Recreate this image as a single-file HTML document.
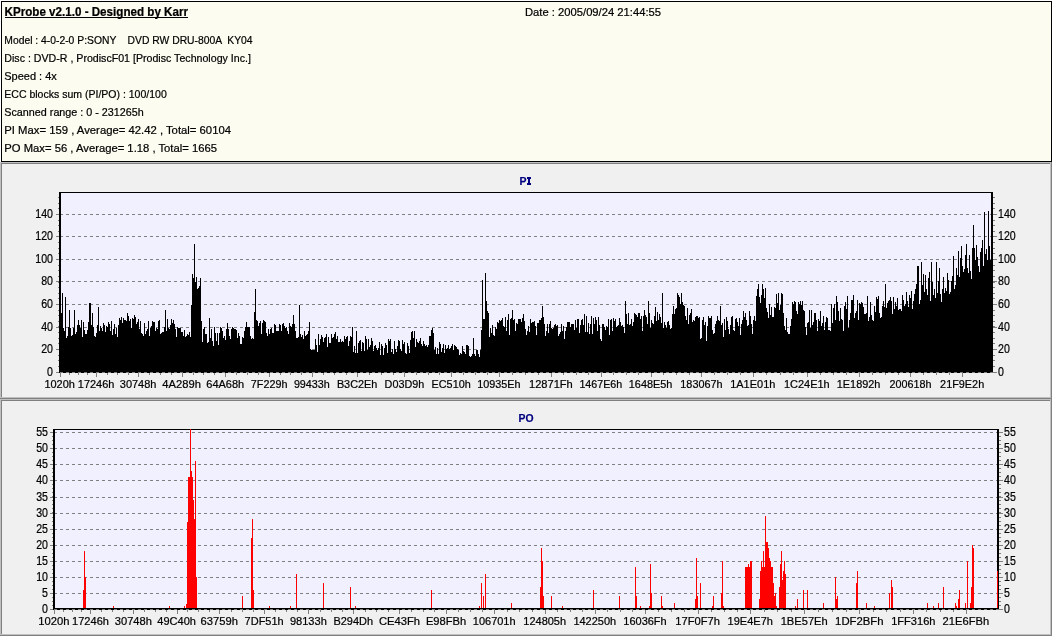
<!DOCTYPE html>
<html><head><meta charset="utf-8"><title>KProbe</title>
<style>html,body{margin:0;padding:0;background:#fff;width:1052px;height:636px;overflow:hidden}text{font-family:"Liberation Sans",sans-serif}</style>
</head><body><svg width="1052" height="636" viewBox="0 0 1052 636" shape-rendering="crispEdges" style="display:block;will-change:transform"><rect x="0" y="0" width="1052" height="636" fill="#FFFFFF"/><rect x="1" y="1" width="1051" height="161" fill="#000000"/><rect x="2" y="2" width="1049" height="159" fill="#FCFCF0"/><rect x="0" y="162" width="1052" height="237" fill="#F0F0F0"/><rect x="0" y="162" width="1052" height="1" fill="#C0C0C0"/><rect x="0" y="163" width="1051" height="1" fill="#808080"/><rect x="0" y="162" width="1" height="237" fill="#C0C0C0"/><rect x="1" y="163" width="1" height="236" fill="#808080"/><rect x="0" y="398" width="1052" height="1" fill="#808080"/><rect x="1" y="397" width="1051" height="1" fill="#C0C0C0"/><rect x="1051" y="162" width="1" height="237" fill="#808080"/><rect x="1050" y="163" width="1" height="235" fill="#C0C0C0"/><rect x="0" y="399" width="1052" height="237" fill="#F0F0F0"/><rect x="0" y="399" width="1052" height="1" fill="#C0C0C0"/><rect x="0" y="400" width="1051" height="1" fill="#808080"/><rect x="0" y="399" width="1" height="237" fill="#C0C0C0"/><rect x="1" y="400" width="1" height="236" fill="#808080"/><rect x="0" y="635" width="1052" height="1" fill="#808080"/><rect x="1" y="634" width="1051" height="1" fill="#C0C0C0"/><rect x="1051" y="399" width="1" height="237" fill="#808080"/><rect x="1050" y="400" width="1" height="235" fill="#C0C0C0"/><rect x="5" y="17" width="183" height="1" fill="#000"/><rect x="59" y="192" width="934" height="181" fill="#000"/><rect x="61" y="193" width="930" height="178" fill="#F0F0FF"/><path d="M61 372.5H991" stroke="#808080" stroke-width="1" stroke-dasharray="3 3" stroke-dashoffset="1" fill="none"/><path d="M61 349.5H991" stroke="#808080" stroke-width="1" stroke-dasharray="3 3" stroke-dashoffset="1" fill="none"/><path d="M61 327.5H991" stroke="#808080" stroke-width="1" stroke-dasharray="3 3" stroke-dashoffset="1" fill="none"/><path d="M61 304.5H991" stroke="#808080" stroke-width="1" stroke-dasharray="3 3" stroke-dashoffset="1" fill="none"/><path d="M61 281.5H991" stroke="#808080" stroke-width="1" stroke-dasharray="3 3" stroke-dashoffset="1" fill="none"/><path d="M61 259.5H991" stroke="#808080" stroke-width="1" stroke-dasharray="3 3" stroke-dashoffset="1" fill="none"/><path d="M61 236.5H991" stroke="#808080" stroke-width="1" stroke-dasharray="3 3" stroke-dashoffset="1" fill="none"/><path d="M61 214.5H991" stroke="#808080" stroke-width="1" stroke-dasharray="3 3" stroke-dashoffset="1" fill="none"/><path d="M61 371V313.0h1V371zM62 371V292.8h1V371zM63 371V327.6h1V371zM64 371V331.0h1V371zM65 371V297.2h1V371zM66 371V337.8h1V371zM67 371V336.3h1V371zM68 371V326.5h1V371zM69 371V309.6h1V371zM70 371V327.7h1V371zM71 371V335.9h1V371zM72 371V335.2h1V371zM73 371V327.9h1V371zM74 371V309.6h1V371zM75 371V334.2h1V371zM76 371V331.8h1V371zM77 371V324.7h1V371zM78 371V320.4h1V371zM79 371V325.4h1V371zM80 371V328.4h1V371zM81 371V320.0h1V371zM82 371V336.8h1V371zM83 371V321.5h1V371zM84 371V330.4h1V371zM85 371V333.7h1V371zM86 371V334.4h1V371zM87 371V330.0h1V371zM88 371V322.1h1V371zM89 371V302.9h1V371zM90 371V302.9h1V371zM91 371V325.4h1V371zM92 371V313.0h1V371zM93 371V326.7h1V371zM94 371V336.4h1V371zM95 371V336.5h1V371zM96 371V332.6h1V371zM97 371V324.8h1V371zM98 371V307.4h1V371zM99 371V330.5h1V371zM100 371V326.1h1V371zM101 371V328.1h1V371zM102 371V330.7h1V371zM103 371V323.3h1V371zM104 371V324.6h1V371zM105 371V331.8h1V371zM106 371V326.3h1V371zM107 371V327.0h1V371zM108 371V322.3h1V371zM109 371V324.2h1V371zM110 371V330.9h1V371zM111 371V321.1h1V371zM112 371V334.7h1V371zM113 371V328.7h1V371zM114 371V323.8h1V371zM115 371V333.8h1V371zM116 371V327.6h1V371zM117 371V337.3h1V371zM118 371V325.0h1V371zM119 371V317.6h1V371zM120 371V319.7h1V371zM121 371V316.5h1V371zM122 371V323.1h1V371zM123 371V318.3h1V371zM124 371V319.5h1V371zM125 371V319.6h1V371zM126 371V321.2h1V371zM127 371V313.0h1V371zM128 371V315.8h1V371zM129 371V320.9h1V371zM130 371V318.7h1V371zM131 371V328.1h1V371zM132 371V318.3h1V371zM133 371V318.9h1V371zM134 371V315.3h1V371zM135 371V317.0h1V371zM136 371V323.6h1V371zM137 371V322.1h1V371zM138 371V318.6h1V371zM139 371V329.4h1V371zM140 371V321.1h1V371zM141 371V333.1h1V371zM142 371V334.4h1V371zM143 371V336.3h1V371zM144 371V322.7h1V371zM145 371V334.1h1V371zM146 371V331.2h1V371zM147 371V328.5h1V371zM148 371V321.4h1V371zM149 371V335.5h1V371zM150 371V327.5h1V371zM151 371V325.9h1V371zM152 371V321.2h1V371zM153 371V322.0h1V371zM154 371V321.5h1V371zM155 371V330.6h1V371zM156 371V328.0h1V371zM157 371V329.1h1V371zM158 371V321.2h1V371zM159 371V320.3h1V371zM160 371V333.5h1V371zM161 371V333.2h1V371zM162 371V331.8h1V371zM163 371V331.7h1V371zM164 371V326.6h1V371zM165 371V309.6h1V371zM166 371V331.0h1V371zM167 371V318.6h1V371zM168 371V327.8h1V371zM169 371V328.7h1V371zM170 371V325.1h1V371zM171 371V319.3h1V371zM172 371V323.1h1V371zM173 371V319.8h1V371zM174 371V324.3h1V371zM175 371V329.1h1V371zM176 371V336.7h1V371zM177 371V327.3h1V371zM178 371V328.2h1V371zM179 371V327.5h1V371zM180 371V328.1h1V371zM181 371V331.8h1V371zM182 371V331.7h1V371zM183 371V335.7h1V371zM184 371V329.5h1V371zM185 371V336.5h1V371zM186 371V336.4h1V371zM187 371V334.0h1V371zM188 371V334.7h1V371zM189 371V332.4h1V371zM190 371V336.8h1V371zM191 371V305.1h1V371zM192 371V273.6h1V371zM193 371V278.1h1V371zM194 371V244.4h1V371zM195 371V281.5h1V371zM196 371V277.0h1V371zM197 371V289.4h1V371zM198 371V288.2h1V371zM199 371V286.0h1V371zM200 371V278.1h1V371zM201 371V320.9h1V371zM202 371V341.8h1V371zM203 371V328.5h1V371zM204 371V326.6h1V371zM205 371V334.4h1V371zM206 371V334.0h1V371zM207 371V343.0h1V371zM208 371V342.4h1V371zM209 371V317.5h1V371zM210 371V338.2h1V371zM211 371V328.8h1V371zM212 371V340.7h1V371zM213 371V345.6h1V371zM214 371V327.1h1V371zM215 371V333.3h1V371zM216 371V341.1h1V371zM217 371V333.1h1V371zM218 371V345.4h1V371zM219 371V333.3h1V371zM220 371V326.8h1V371zM221 371V328.3h1V371zM222 371V330.7h1V371zM223 371V337.7h1V371zM224 371V335.7h1V371zM225 371V339.8h1V371zM226 371V329.4h1V371zM227 371V323.1h1V371zM228 371V329.3h1V371zM229 371V336.3h1V371zM230 371V338.5h1V371zM231 371V328.9h1V371zM232 371V326.7h1V371zM233 371V328.3h1V371zM234 371V329.0h1V371zM235 371V328.8h1V371zM236 371V329.8h1V371zM237 371V338.4h1V371zM238 371V333.1h1V371zM239 371V335.9h1V371zM240 371V344.3h1V371zM241 371V344.4h1V371zM242 371V337.3h1V371zM243 371V337.7h1V371zM244 371V330.5h1V371zM245 371V327.0h1V371zM246 371V322.0h1V371zM247 371V327.3h1V371zM248 371V326.6h1V371zM249 371V327.1h1V371zM250 371V335.7h1V371zM251 371V338.6h1V371zM252 371V338.4h1V371zM253 371V339.1h1V371zM254 371V311.9h1V371zM255 371V289.4h1V371zM256 371V319.9h1V371zM257 371V320.6h1V371zM258 371V325.8h1V371zM259 371V323.2h1V371zM260 371V321.2h1V371zM261 371V334.3h1V371zM262 371V323.1h1V371zM263 371V319.7h1V371zM264 371V321.4h1V371zM265 371V321.8h1V371zM266 371V332.5h1V371zM267 371V336.3h1V371zM268 371V329.4h1V371zM269 371V334.2h1V371zM270 371V329.3h1V371zM271 371V327.9h1V371zM272 371V333.4h1V371zM273 371V333.3h1V371zM274 371V323.5h1V371zM275 371V325.1h1V371zM276 371V330.5h1V371zM277 371V331.1h1V371zM278 371V330.8h1V371zM279 371V323.8h1V371zM280 371V324.5h1V371zM281 371V330.8h1V371zM282 371V324.3h1V371zM283 371V323.3h1V371zM284 371V325.6h1V371zM285 371V328.4h1V371zM286 371V326.5h1V371zM287 371V331.1h1V371zM288 371V333.5h1V371zM289 371V323.3h1V371zM290 371V325.7h1V371zM291 371V326.7h1V371zM292 371V323.6h1V371zM293 371V315.2h1V371zM294 371V324.0h1V371zM295 371V331.3h1V371zM296 371V338.1h1V371zM297 371V337.5h1V371zM298 371V336.9h1V371zM299 371V305.1h1V371zM300 371V333.6h1V371zM301 371V337.4h1V371zM302 371V335.4h1V371zM303 371V339.4h1V371zM304 371V330.6h1V371zM305 371V336.1h1V371zM306 371V334.9h1V371zM307 371V333.6h1V371zM308 371V330.7h1V371zM309 371V322.0h1V371zM310 371V349.2h1V371zM311 371V350.1h1V371zM312 371V350.1h1V371zM313 371V350.1h1V371zM314 371V350.4h1V371zM315 371V339.3h1V371zM316 371V344.7h1V371zM317 371V351.6h1V371zM318 371V333.7h1V371zM319 371V344.9h1V371zM320 371V338.7h1V371zM321 371V334.7h1V371zM322 371V337.3h1V371zM323 371V341.5h1V371zM324 371V338.0h1V371zM325 371V337.4h1V371zM326 371V333.9h1V371zM327 371V346.8h1V371zM328 371V337.3h1V371zM329 371V343.1h1V371zM330 371V342.5h1V371zM331 371V334.1h1V371zM332 371V338.1h1V371zM333 371V337.3h1V371zM334 371V334.2h1V371zM335 371V332.1h1V371zM336 371V339.3h1V371zM337 371V336.4h1V371zM338 371V341.5h1V371zM339 371V341.5h1V371zM340 371V339.1h1V371zM341 371V342.3h1V371zM342 371V341.2h1V371zM343 371V341.9h1V371zM344 371V336.1h1V371zM345 371V339.0h1V371zM346 371V336.9h1V371zM347 371V336.1h1V371zM348 371V345.5h1V371zM349 371V340.8h1V371zM350 371V336.1h1V371zM351 371V337.3h1V371zM352 371V326.5h1V371zM353 371V351.8h1V371zM354 371V345.8h1V371zM355 371V353.1h1V371zM356 371V331.0h1V371zM357 371V353.1h1V371zM358 371V342.7h1V371zM359 371V341.3h1V371zM360 371V340.0h1V371zM361 371V351.0h1V371zM362 371V342.1h1V371zM363 371V342.8h1V371zM364 371V351.3h1V371zM365 371V335.5h1V371zM366 371V339.2h1V371zM367 371V349.6h1V371zM368 371V339.4h1V371zM369 371V346.5h1V371zM370 371V345.2h1V371zM371 371V337.8h1V371zM372 371V340.8h1V371zM373 371V350.8h1V371zM374 371V346.0h1V371zM375 371V344.8h1V371zM376 371V347.5h1V371zM377 371V350.1h1V371zM378 371V347.8h1V371zM379 371V342.1h1V371zM380 371V355.2h1V371zM381 371V344.2h1V371zM382 371V345.9h1V371zM383 371V355.3h1V371zM384 371V347.6h1V371zM385 371V343.3h1V371zM386 371V344.8h1V371zM387 371V353.4h1V371zM388 371V339.0h1V371zM389 371V341.3h1V371zM390 371V339.2h1V371zM391 371V352.2h1V371zM392 371V348.8h1V371zM393 371V354.3h1V371zM394 371V341.4h1V371zM395 371V348.7h1V371zM396 371V351.6h1V371zM397 371V346.1h1V371zM398 371V339.8h1V371zM399 371V340.9h1V371zM400 371V348.9h1V371zM401 371V351.1h1V371zM402 371V339.8h1V371zM403 371V344.0h1V371zM404 371V342.3h1V371zM405 371V352.6h1V371zM406 371V353.6h1V371zM407 371V342.5h1V371zM408 371V346.1h1V371zM409 371V353.1h1V371zM410 371V339.5h1V371zM411 371V332.3h1V371zM412 371V331.1h1V371zM413 371V337.7h1V371zM414 371V330.8h1V371zM415 371V346.8h1V371zM416 371V338.7h1V371zM417 371V342.0h1V371zM418 371V343.1h1V371zM419 371V341.1h1V371zM420 371V338.3h1V371zM421 371V343.9h1V371zM422 371V345.7h1V371zM423 371V341.3h1V371zM424 371V344.2h1V371zM425 371V346.0h1V371zM426 371V345.2h1V371zM427 371V347.1h1V371zM428 371V344.7h1V371zM429 371V335.5h1V371zM430 371V335.7h1V371zM431 371V330.0h1V371zM432 371V327.6h1V371zM433 371V333.0h1V371zM434 371V349.8h1V371zM435 371V346.8h1V371zM436 371V354.2h1V371zM437 371V348.4h1V371zM438 371V354.4h1V371zM439 371V341.7h1V371zM440 371V343.9h1V371zM441 371V351.9h1V371zM442 371V348.2h1V371zM443 371V343.9h1V371zM444 371V353.4h1V371zM445 371V344.9h1V371zM446 371V348.7h1V371zM447 371V348.0h1V371zM448 371V344.8h1V371zM449 371V349.2h1V371zM450 371V347.9h1V371zM451 371V346.1h1V371zM452 371V343.5h1V371zM453 371V349.8h1V371zM454 371V344.8h1V371zM455 371V345.9h1V371zM456 371V346.6h1V371zM457 371V349.0h1V371zM458 371V349.7h1V371zM459 371V354.5h1V371zM460 371V352.9h1V371zM461 371V354.1h1V371zM462 371V345.6h1V371zM463 371V350.9h1V371zM464 371V352.3h1V371zM465 371V353.8h1V371zM466 371V344.7h1V371zM467 371V344.5h1V371zM468 371V346.3h1V371zM469 371V356.1h1V371zM470 371V356.6h1V371zM471 371V356.0h1V371zM472 371V354.3h1V371zM473 371V337.8h1V371zM474 371V354.4h1V371zM475 371V356.3h1V371zM476 371V350.4h1V371zM477 371V350.3h1V371zM478 371V353.5h1V371zM479 371V356.5h1V371zM480 371V350.4h1V371zM481 371V329.9h1V371zM482 371V280.4h1V371zM483 371V318.6h1V371zM484 371V318.6h1V371zM485 371V272.5h1V371zM486 371V300.6h1V371zM487 371V310.8h1V371zM488 371V313.0h1V371zM489 371V336.9h1V371zM490 371V328.1h1V371zM491 371V332.7h1V371zM492 371V325.4h1V371zM493 371V334.6h1V371zM494 371V335.6h1V371zM495 371V327.3h1V371zM496 371V328.8h1V371zM497 371V322.2h1V371zM498 371V323.2h1V371zM499 371V319.8h1V371zM500 371V321.1h1V371zM501 371V320.3h1V371zM502 371V318.0h1V371zM503 371V325.6h1V371zM504 371V326.8h1V371zM505 371V316.6h1V371zM506 371V330.9h1V371zM507 371V320.1h1V371zM508 371V314.1h1V371zM509 371V334.5h1V371zM510 371V318.6h1V371zM511 371V317.8h1V371zM512 371V309.6h1V371zM513 371V320.0h1V371zM514 371V318.9h1V371zM515 371V331.2h1V371zM516 371V323.2h1V371zM517 371V323.6h1V371zM518 371V318.6h1V371zM519 371V319.0h1V371zM520 371V318.7h1V371zM521 371V322.3h1V371zM522 371V317.8h1V371zM523 371V314.1h1V371zM524 371V320.6h1V371zM525 371V328.9h1V371zM526 371V335.1h1V371zM527 371V331.4h1V371zM528 371V326.2h1V371zM529 371V332.2h1V371zM530 371V318.6h1V371zM531 371V322.7h1V371zM532 371V321.6h1V371zM533 371V321.6h1V371zM534 371V320.8h1V371zM535 371V326.0h1V371zM536 371V335.0h1V371zM537 371V322.7h1V371zM538 371V323.2h1V371zM539 371V320.2h1V371zM540 371V319.8h1V371zM541 371V318.1h1V371zM542 371V306.2h1V371zM543 371V317.1h1V371zM544 371V324.2h1V371zM545 371V336.0h1V371zM546 371V331.4h1V371zM547 371V324.2h1V371zM548 371V332.6h1V371zM549 371V324.0h1V371zM550 371V321.2h1V371zM551 371V327.5h1V371zM552 371V329.3h1V371zM553 371V327.7h1V371zM554 371V324.8h1V371zM555 371V323.7h1V371zM556 371V325.7h1V371zM557 371V325.3h1V371zM558 371V335.9h1V371zM559 371V333.9h1V371zM560 371V331.6h1V371zM561 371V324.0h1V371zM562 371V330.6h1V371zM563 371V326.4h1V371zM564 371V338.6h1V371zM565 371V331.4h1V371zM566 371V327.2h1V371zM567 371V322.0h1V371zM568 371V321.7h1V371zM569 371V321.9h1V371zM570 371V326.9h1V371zM571 371V323.8h1V371zM572 371V324.4h1V371zM573 371V324.4h1V371zM574 371V330.0h1V371zM575 371V319.7h1V371zM576 371V328.4h1V371zM577 371V318.8h1V371zM578 371V319.2h1V371zM579 371V333.0h1V371zM580 371V324.5h1V371zM581 371V320.4h1V371zM582 371V318.9h1V371zM583 371V324.6h1V371zM584 371V314.1h1V371zM585 371V331.7h1V371zM586 371V316.1h1V371zM587 371V331.6h1V371zM588 371V322.7h1V371zM589 371V333.9h1V371zM590 371V323.9h1V371zM591 371V316.0h1V371zM592 371V334.2h1V371zM593 371V318.3h1V371zM594 371V324.3h1V371zM595 371V317.1h1V371zM596 371V320.4h1V371zM597 371V331.0h1V371zM598 371V316.9h1V371zM599 371V324.7h1V371zM600 371V339.3h1V371zM601 371V341.3h1V371zM602 371V323.7h1V371zM603 371V324.3h1V371zM604 371V326.7h1V371zM605 371V330.0h1V371zM606 371V326.0h1V371zM607 371V326.5h1V371zM608 371V319.3h1V371zM609 371V335.1h1V371zM610 371V320.3h1V371zM611 371V319.3h1V371zM612 371V330.5h1V371zM613 371V318.3h1V371zM614 371V320.8h1V371zM615 371V318.6h1V371zM616 371V326.9h1V371zM617 371V325.6h1V371zM618 371V325.2h1V371zM619 371V317.5h1V371zM620 371V322.4h1V371zM621 371V325.7h1V371zM622 371V324.7h1V371zM623 371V327.2h1V371zM624 371V332.6h1V371zM625 371V300.6h1V371zM626 371V314.2h1V371zM627 371V323.8h1V371zM628 371V312.8h1V371zM629 371V324.6h1V371zM630 371V324.2h1V371zM631 371V319.3h1V371zM632 371V326.1h1V371zM633 371V321.9h1V371zM634 371V312.5h1V371zM635 371V313.5h1V371zM636 371V314.5h1V371zM637 371V317.3h1V371zM638 371V313.1h1V371zM639 371V312.7h1V371zM640 371V318.7h1V371zM641 371V315.9h1V371zM642 371V330.7h1V371zM643 371V315.7h1V371zM644 371V309.6h1V371zM645 371V315.4h1V371zM646 371V317.1h1V371zM647 371V323.8h1V371zM648 371V300.6h1V371zM649 371V312.9h1V371zM650 371V327.8h1V371zM651 371V320.0h1V371zM652 371V322.5h1V371zM653 371V323.5h1V371zM654 371V315.6h1V371zM655 371V306.6h1V371zM656 371V320.6h1V371zM657 371V312.0h1V371zM658 371V319.5h1V371zM659 371V313.9h1V371zM660 371V317.3h1V371zM661 371V323.3h1V371zM662 371V292.8h1V371zM663 371V327.7h1V371zM664 371V321.5h1V371zM665 371V324.7h1V371zM666 371V327.6h1V371zM667 371V321.5h1V371zM668 371V320.9h1V371zM669 371V325.2h1V371zM670 371V328.7h1V371zM671 371V327.9h1V371zM672 371V314.2h1V371zM673 371V306.1h1V371zM674 371V314.2h1V371zM675 371V309.0h1V371zM676 371V308.4h1V371zM677 371V292.8h1V371zM678 371V294.7h1V371zM679 371V297.2h1V371zM680 371V304.3h1V371zM681 371V292.8h1V371zM682 371V301.8h1V371zM683 371V305.2h1V371zM684 371V306.2h1V371zM685 371V315.6h1V371zM686 371V320.1h1V371zM687 371V307.8h1V371zM688 371V324.2h1V371zM689 371V315.3h1V371zM690 371V313.1h1V371zM691 371V309.4h1V371zM692 371V321.6h1V371zM693 371V320.2h1V371zM694 371V320.8h1V371zM695 371V317.4h1V371zM696 371V316.4h1V371zM697 371V316.0h1V371zM698 371V317.7h1V371zM699 371V317.3h1V371zM700 371V338.5h1V371zM701 371V337.8h1V371zM702 371V320.1h1V371zM703 371V316.9h1V371zM704 371V324.6h1V371zM705 371V322.3h1V371zM706 371V341.0h1V371zM707 371V326.4h1V371zM708 371V316.4h1V371zM709 371V318.1h1V371zM710 371V317.6h1V371zM711 371V315.7h1V371zM712 371V329.9h1V371zM713 371V334.3h1V371zM714 371V332.7h1V371zM715 371V323.6h1V371zM716 371V320.6h1V371zM717 371V316.2h1V371zM718 371V319.8h1V371zM719 371V321.2h1V371zM720 371V306.2h1V371zM721 371V324.9h1V371zM722 371V323.0h1V371zM723 371V337.4h1V371zM724 371V318.8h1V371zM725 371V330.3h1V371zM726 371V316.5h1V371zM727 371V321.2h1V371zM728 371V328.5h1V371zM729 371V333.6h1V371zM730 371V325.3h1V371zM731 371V316.9h1V371zM732 371V315.8h1V371zM733 371V329.7h1V371zM734 371V331.4h1V371zM735 371V319.1h1V371zM736 371V317.9h1V371zM737 371V322.0h1V371zM738 371V326.1h1V371zM739 371V317.6h1V371zM740 371V334.9h1V371zM741 371V324.0h1V371zM742 371V320.4h1V371zM743 371V311.4h1V371zM744 371V316.7h1V371zM745 371V312.6h1V371zM746 371V320.1h1V371zM747 371V325.8h1V371zM748 371V325.4h1V371zM749 371V311.4h1V371zM750 371V315.7h1V371zM751 371V323.9h1V371zM752 371V334.0h1V371zM753 371V319.6h1V371zM754 371V316.2h1V371zM755 371V321.2h1V371zM756 371V296.2h1V371zM757 371V289.2h1V371zM758 371V283.8h1V371zM759 371V296.8h1V371zM760 371V302.5h1V371zM761 371V294.6h1V371zM762 371V283.8h1V371zM763 371V289.0h1V371zM764 371V297.5h1V371zM765 371V287.5h1V371zM766 371V307.7h1V371zM767 371V311.6h1V371zM768 371V317.8h1V371zM769 371V304.4h1V371zM770 371V315.3h1V371zM771 371V306.5h1V371zM772 371V317.2h1V371zM773 371V317.4h1V371zM774 371V307.4h1V371zM775 371V307.9h1V371zM776 371V293.6h1V371zM777 371V302.8h1V371zM778 371V292.8h1V371zM779 371V310.1h1V371zM780 371V304.7h1V371zM781 371V292.8h1V371zM782 371V293.7h1V371zM783 371V312.8h1V371zM784 371V326.2h1V371zM785 371V329.7h1V371zM786 371V317.8h1V371zM787 371V331.5h1V371zM788 371V334.3h1V371zM789 371V334.0h1V371zM790 371V326.2h1V371zM791 371V318.8h1V371zM792 371V302.2h1V371zM793 371V304.3h1V371zM794 371V300.7h1V371zM795 371V301.5h1V371zM796 371V311.0h1V371zM797 371V314.2h1V371zM798 371V301.5h1V371zM799 371V304.1h1V371zM800 371V300.6h1V371zM801 371V305.3h1V371zM802 371V300.6h1V371zM803 371V310.2h1V371zM804 371V311.0h1V371zM805 371V326.6h1V371zM806 371V334.7h1V371zM807 371V323.4h1V371zM808 371V321.7h1V371zM809 371V310.3h1V371zM810 371V328.1h1V371zM811 371V310.2h1V371zM812 371V325.4h1V371zM813 371V321.6h1V371zM814 371V312.5h1V371zM815 371V312.5h1V371zM816 371V319.9h1V371zM817 371V331.3h1V371zM818 371V319.0h1V371zM819 371V321.2h1V371zM820 371V310.9h1V371zM821 371V325.8h1V371zM822 371V322.9h1V371zM823 371V316.3h1V371zM824 371V330.1h1V371zM825 371V322.2h1V371zM826 371V317.2h1V371zM827 371V317.7h1V371zM828 371V329.7h1V371zM829 371V329.9h1V371zM830 371V330.8h1V371zM831 371V303.7h1V371zM832 371V322.9h1V371zM833 371V308.1h1V371zM834 371V303.9h1V371zM835 371V319.6h1V371zM836 371V296.1h1V371zM837 371V302.0h1V371zM838 371V310.9h1V371zM839 371V321.3h1V371zM840 371V307.8h1V371zM841 371V319.1h1V371zM842 371V320.2h1V371zM843 371V330.6h1V371zM844 371V306.2h1V371zM845 371V302.0h1V371zM846 371V309.1h1V371zM847 371V296.1h1V371zM848 371V328.1h1V371zM849 371V320.0h1V371zM850 371V312.7h1V371zM851 371V300.2h1V371zM852 371V300.2h1V371zM853 371V295.0h1V371zM854 371V318.4h1V371zM855 371V313.0h1V371zM856 371V311.1h1V371zM857 371V300.2h1V371zM858 371V319.7h1V371zM859 371V302.9h1V371zM860 371V304.3h1V371zM861 371V302.1h1V371zM862 371V303.1h1V371zM863 371V307.0h1V371zM864 371V314.1h1V371zM865 371V314.1h1V371zM866 371V312.8h1V371zM867 371V296.1h1V371zM868 371V320.9h1V371zM869 371V316.8h1V371zM870 371V302.4h1V371zM871 371V314.9h1V371zM872 371V320.4h1V371zM873 371V321.4h1V371zM874 371V306.4h1V371zM875 371V311.9h1V371zM876 371V296.6h1V371zM877 371V298.5h1V371zM878 371V296.2h1V371zM879 371V312.7h1V371zM880 371V317.8h1V371zM881 371V317.1h1V371zM882 371V306.3h1V371zM883 371V301.4h1V371zM884 371V307.1h1V371zM885 371V283.8h1V371zM886 371V307.5h1V371zM887 371V302.7h1V371zM888 371V301.3h1V371zM889 371V299.6h1V371zM890 371V297.4h1V371zM891 371V301.0h1V371zM892 371V313.7h1V371zM893 371V297.0h1V371zM894 371V308.7h1V371zM895 371V302.3h1V371zM896 371V306.3h1V371zM897 371V298.3h1V371zM898 371V310.1h1V371zM899 371V308.7h1V371zM900 371V308.5h1V371zM901 371V310.6h1V371zM902 371V294.6h1V371zM903 371V300.4h1V371zM904 371V305.7h1V371zM905 371V303.9h1V371zM906 371V291.9h1V371zM907 371V301.1h1V371zM908 371V307.0h1V371zM909 371V294.8h1V371zM910 371V297.6h1V371zM911 371V291.1h1V371zM912 371V309.4h1V371zM913 371V300.5h1V371zM914 371V293.7h1V371zM915 371V289.4h1V371zM916 371V283.6h1V371zM917 371V265.8h1V371zM918 371V265.8h1V371zM919 371V303.8h1V371zM920 371V300.3h1V371zM921 371V262.4h1V371zM922 371V285.1h1V371zM923 371V273.8h1V371zM924 371V292.0h1V371zM925 371V275.3h1V371zM926 371V288.7h1V371zM927 371V295.3h1V371zM928 371V277.5h1V371zM929 371V272.2h1V371zM930 371V300.8h1V371zM931 371V262.4h1V371zM932 371V281.5h1V371zM933 371V295.2h1V371zM934 371V289.3h1V371zM935 371V297.6h1V371zM936 371V262.4h1V371zM937 371V292.5h1V371zM938 371V280.8h1V371zM939 371V268.0h1V371zM940 371V293.5h1V371zM941 371V301.9h1V371zM942 371V288.5h1V371zM943 371V277.2h1V371zM944 371V293.0h1V371zM945 371V287.9h1V371zM946 371V291.1h1V371zM947 371V273.2h1V371zM948 371V279.6h1V371zM949 371V294.2h1V371zM950 371V291.8h1V371zM951 371V281.2h1V371zM952 371V275.9h1V371zM953 371V255.6h1V371zM954 371V288.8h1V371zM955 371V285.2h1V371zM956 371V268.1h1V371zM957 371V275.4h1V371zM958 371V251.1h1V371zM959 371V276.8h1V371zM960 371V257.5h1V371zM961 371V245.5h1V371zM962 371V266.2h1V371zM963 371V271.6h1V371zM964 371V268.8h1V371zM965 371V255.0h1V371zM966 371V244.4h1V371zM967 371V267.8h1V371zM968 371V272.7h1V371zM969 371V255.0h1V371zM970 371V270.7h1V371zM971 371V278.7h1V371zM972 371V247.5h1V371zM973 371V225.2h1V371zM974 371V248.3h1V371zM975 371V259.9h1V371zM976 371V245.0h1V371zM977 371V256.7h1V371zM978 371V266.2h1V371zM979 371V272.2h1V371zM980 371V251.7h1V371zM981 371V248.3h1V371zM982 371V239.9h1V371zM983 371V265.6h1V371zM984 371V211.8h1V371zM985 371V253.7h1V371zM986 371V248.8h1V371zM987 371V260.3h1V371zM988 371V210.6h1V371zM989 371V246.0h1V371zM990 371V260.1h1V371zM991 371V192.6h1V371z" fill="#000000"/><path d="M59 372.5H993" stroke="#808080" stroke-width="1" stroke-dasharray="3 3" stroke-dashoffset="5" fill="none"/><rect x="56" y="372" width="3" height="1" fill="#808080"/><rect x="993" y="372" width="4" height="1" fill="#808080"/><rect x="56" y="349" width="3" height="1" fill="#808080"/><rect x="993" y="349" width="4" height="1" fill="#808080"/><rect x="56" y="327" width="3" height="1" fill="#808080"/><rect x="993" y="327" width="4" height="1" fill="#808080"/><rect x="56" y="304" width="3" height="1" fill="#808080"/><rect x="993" y="304" width="4" height="1" fill="#808080"/><rect x="56" y="281" width="3" height="1" fill="#808080"/><rect x="993" y="281" width="4" height="1" fill="#808080"/><rect x="56" y="259" width="3" height="1" fill="#808080"/><rect x="993" y="259" width="4" height="1" fill="#808080"/><rect x="56" y="236" width="3" height="1" fill="#808080"/><rect x="993" y="236" width="4" height="1" fill="#808080"/><rect x="56" y="214" width="3" height="1" fill="#808080"/><rect x="993" y="214" width="4" height="1" fill="#808080"/><rect x="58" y="366" width="1" height="1" fill="#808080"/><rect x="993" y="366" width="2" height="1" fill="#808080"/><rect x="58" y="360" width="1" height="1" fill="#808080"/><rect x="993" y="360" width="2" height="1" fill="#808080"/><rect x="58" y="355" width="1" height="1" fill="#808080"/><rect x="993" y="355" width="2" height="1" fill="#808080"/><rect x="58" y="349" width="1" height="1" fill="#808080"/><rect x="993" y="349" width="2" height="1" fill="#808080"/><rect x="58" y="343" width="1" height="1" fill="#808080"/><rect x="993" y="343" width="2" height="1" fill="#808080"/><rect x="58" y="338" width="1" height="1" fill="#808080"/><rect x="993" y="338" width="2" height="1" fill="#808080"/><rect x="58" y="332" width="1" height="1" fill="#808080"/><rect x="993" y="332" width="2" height="1" fill="#808080"/><rect x="58" y="326" width="1" height="1" fill="#808080"/><rect x="993" y="326" width="2" height="1" fill="#808080"/><rect x="58" y="321" width="1" height="1" fill="#808080"/><rect x="993" y="321" width="2" height="1" fill="#808080"/><rect x="58" y="315" width="1" height="1" fill="#808080"/><rect x="993" y="315" width="2" height="1" fill="#808080"/><rect x="58" y="310" width="1" height="1" fill="#808080"/><rect x="993" y="310" width="2" height="1" fill="#808080"/><rect x="58" y="304" width="1" height="1" fill="#808080"/><rect x="993" y="304" width="2" height="1" fill="#808080"/><rect x="58" y="298" width="1" height="1" fill="#808080"/><rect x="993" y="298" width="2" height="1" fill="#808080"/><rect x="58" y="293" width="1" height="1" fill="#808080"/><rect x="993" y="293" width="2" height="1" fill="#808080"/><rect x="58" y="287" width="1" height="1" fill="#808080"/><rect x="993" y="287" width="2" height="1" fill="#808080"/><rect x="58" y="282" width="1" height="1" fill="#808080"/><rect x="993" y="282" width="2" height="1" fill="#808080"/><rect x="58" y="276" width="1" height="1" fill="#808080"/><rect x="993" y="276" width="2" height="1" fill="#808080"/><rect x="58" y="270" width="1" height="1" fill="#808080"/><rect x="993" y="270" width="2" height="1" fill="#808080"/><rect x="58" y="265" width="1" height="1" fill="#808080"/><rect x="993" y="265" width="2" height="1" fill="#808080"/><rect x="58" y="259" width="1" height="1" fill="#808080"/><rect x="993" y="259" width="2" height="1" fill="#808080"/><rect x="58" y="253" width="1" height="1" fill="#808080"/><rect x="993" y="253" width="2" height="1" fill="#808080"/><rect x="58" y="248" width="1" height="1" fill="#808080"/><rect x="993" y="248" width="2" height="1" fill="#808080"/><rect x="58" y="242" width="1" height="1" fill="#808080"/><rect x="993" y="242" width="2" height="1" fill="#808080"/><rect x="58" y="236" width="1" height="1" fill="#808080"/><rect x="993" y="236" width="2" height="1" fill="#808080"/><rect x="58" y="231" width="1" height="1" fill="#808080"/><rect x="993" y="231" width="2" height="1" fill="#808080"/><rect x="58" y="225" width="1" height="1" fill="#808080"/><rect x="993" y="225" width="2" height="1" fill="#808080"/><rect x="58" y="220" width="1" height="1" fill="#808080"/><rect x="993" y="220" width="2" height="1" fill="#808080"/><rect x="58" y="214" width="1" height="1" fill="#808080"/><rect x="993" y="214" width="2" height="1" fill="#808080"/><rect x="58" y="208" width="1" height="1" fill="#808080"/><rect x="993" y="208" width="2" height="1" fill="#808080"/><rect x="58" y="203" width="1" height="1" fill="#808080"/><rect x="993" y="203" width="2" height="1" fill="#808080"/><rect x="58" y="197" width="1" height="1" fill="#808080"/><rect x="993" y="197" width="2" height="1" fill="#808080"/><rect x="60" y="373" width="1" height="4" fill="#808080"/><rect x="69" y="373" width="1" height="2" fill="#808080"/><rect x="78" y="373" width="1" height="2" fill="#808080"/><rect x="87" y="373" width="1" height="2" fill="#808080"/><rect x="96" y="373" width="1" height="4" fill="#808080"/><rect x="107" y="373" width="1" height="2" fill="#808080"/><rect x="117" y="373" width="1" height="2" fill="#808080"/><rect x="128" y="373" width="1" height="2" fill="#808080"/><rect x="138" y="373" width="1" height="4" fill="#808080"/><rect x="149" y="373" width="1" height="2" fill="#808080"/><rect x="160" y="373" width="1" height="2" fill="#808080"/><rect x="171" y="373" width="1" height="2" fill="#808080"/><rect x="182" y="373" width="1" height="4" fill="#808080"/><rect x="193" y="373" width="1" height="2" fill="#808080"/><rect x="203" y="373" width="1" height="2" fill="#808080"/><rect x="214" y="373" width="1" height="2" fill="#808080"/><rect x="225" y="373" width="1" height="4" fill="#808080"/><rect x="236" y="373" width="1" height="2" fill="#808080"/><rect x="247" y="373" width="1" height="2" fill="#808080"/><rect x="258" y="373" width="1" height="2" fill="#808080"/><rect x="269" y="373" width="1" height="4" fill="#808080"/><rect x="280" y="373" width="1" height="2" fill="#808080"/><rect x="290" y="373" width="1" height="2" fill="#808080"/><rect x="301" y="373" width="1" height="2" fill="#808080"/><rect x="312" y="373" width="1" height="4" fill="#808080"/><rect x="323" y="373" width="1" height="2" fill="#808080"/><rect x="334" y="373" width="1" height="2" fill="#808080"/><rect x="346" y="373" width="1" height="2" fill="#808080"/><rect x="357" y="373" width="1" height="4" fill="#808080"/><rect x="369" y="373" width="1" height="2" fill="#808080"/><rect x="381" y="373" width="1" height="2" fill="#808080"/><rect x="393" y="373" width="1" height="2" fill="#808080"/><rect x="404" y="373" width="1" height="4" fill="#808080"/><rect x="416" y="373" width="1" height="2" fill="#808080"/><rect x="428" y="373" width="1" height="2" fill="#808080"/><rect x="439" y="373" width="1" height="2" fill="#808080"/><rect x="451" y="373" width="1" height="4" fill="#808080"/><rect x="463" y="373" width="1" height="2" fill="#808080"/><rect x="475" y="373" width="1" height="2" fill="#808080"/><rect x="487" y="373" width="1" height="2" fill="#808080"/><rect x="499" y="373" width="1" height="4" fill="#808080"/><rect x="512" y="373" width="1" height="2" fill="#808080"/><rect x="525" y="373" width="1" height="2" fill="#808080"/><rect x="538" y="373" width="1" height="2" fill="#808080"/><rect x="551" y="373" width="1" height="4" fill="#808080"/><rect x="563" y="373" width="1" height="2" fill="#808080"/><rect x="576" y="373" width="1" height="2" fill="#808080"/><rect x="588" y="373" width="1" height="2" fill="#808080"/><rect x="601" y="373" width="1" height="4" fill="#808080"/><rect x="613" y="373" width="1" height="2" fill="#808080"/><rect x="626" y="373" width="1" height="2" fill="#808080"/><rect x="638" y="373" width="1" height="2" fill="#808080"/><rect x="651" y="373" width="1" height="4" fill="#808080"/><rect x="663" y="373" width="1" height="2" fill="#808080"/><rect x="676" y="373" width="1" height="2" fill="#808080"/><rect x="689" y="373" width="1" height="2" fill="#808080"/><rect x="701" y="373" width="1" height="4" fill="#808080"/><rect x="714" y="373" width="1" height="2" fill="#808080"/><rect x="727" y="373" width="1" height="2" fill="#808080"/><rect x="740" y="373" width="1" height="2" fill="#808080"/><rect x="753" y="373" width="1" height="4" fill="#808080"/><rect x="766" y="373" width="1" height="2" fill="#808080"/><rect x="780" y="373" width="1" height="2" fill="#808080"/><rect x="793" y="373" width="1" height="2" fill="#808080"/><rect x="807" y="373" width="1" height="4" fill="#808080"/><rect x="820" y="373" width="1" height="2" fill="#808080"/><rect x="833" y="373" width="1" height="2" fill="#808080"/><rect x="846" y="373" width="1" height="2" fill="#808080"/><rect x="859" y="373" width="1" height="4" fill="#808080"/><rect x="872" y="373" width="1" height="2" fill="#808080"/><rect x="885" y="373" width="1" height="2" fill="#808080"/><rect x="898" y="373" width="1" height="2" fill="#808080"/><rect x="910" y="373" width="1" height="4" fill="#808080"/><rect x="923" y="373" width="1" height="2" fill="#808080"/><rect x="936" y="373" width="1" height="2" fill="#808080"/><rect x="949" y="373" width="1" height="2" fill="#808080"/><rect x="962" y="373" width="1" height="4" fill="#808080"/><rect x="527" y="177" width="4" height="2" fill="#000080"/><rect x="528" y="179" width="2" height="4" fill="#000080"/><rect x="527" y="183" width="4" height="2" fill="#000080"/><rect x="53" y="429" width="946" height="181" fill="#000"/><rect x="55" y="430" width="942" height="178" fill="#F0F0FF"/><path d="M55 609.5H997" stroke="#808080" stroke-width="1" stroke-dasharray="3 3" stroke-dashoffset="1" fill="none"/><path d="M55 593.5H997" stroke="#808080" stroke-width="1" stroke-dasharray="3 3" stroke-dashoffset="1" fill="none"/><path d="M55 577.5H997" stroke="#808080" stroke-width="1" stroke-dasharray="3 3" stroke-dashoffset="1" fill="none"/><path d="M55 561.5H997" stroke="#808080" stroke-width="1" stroke-dasharray="3 3" stroke-dashoffset="1" fill="none"/><path d="M55 545.5H997" stroke="#808080" stroke-width="1" stroke-dasharray="3 3" stroke-dashoffset="1" fill="none"/><path d="M55 529.5H997" stroke="#808080" stroke-width="1" stroke-dasharray="3 3" stroke-dashoffset="1" fill="none"/><path d="M55 513.5H997" stroke="#808080" stroke-width="1" stroke-dasharray="3 3" stroke-dashoffset="1" fill="none"/><path d="M55 497.5H997" stroke="#808080" stroke-width="1" stroke-dasharray="3 3" stroke-dashoffset="1" fill="none"/><path d="M55 480.5H997" stroke="#808080" stroke-width="1" stroke-dasharray="3 3" stroke-dashoffset="1" fill="none"/><path d="M55 464.5H997" stroke="#808080" stroke-width="1" stroke-dasharray="3 3" stroke-dashoffset="1" fill="none"/><path d="M55 448.5H997" stroke="#808080" stroke-width="1" stroke-dasharray="3 3" stroke-dashoffset="1" fill="none"/><path d="M55 432.5H997" stroke="#808080" stroke-width="1" stroke-dasharray="3 3" stroke-dashoffset="1" fill="none"/><path d="M83 608V589.8h1V608zM84 608V551.1h1V608zM85 608V576.9h1V608zM113 608V605.9h1V608zM169 608V605.9h1V608zM184 608V605.9h1V608zM186 608V603.9h1V608zM187 608V522.2h1V608zM188 608V477.1h1V608zM189 608V477.1h1V608zM190 608V429.0h1V608zM191 608V470.6h1V608zM192 608V477.1h1V608zM193 608V499.6h1V608zM194 608V518.9h1V608zM195 608V461.0h1V608zM196 608V576.9h1V608zM242 608V596.2h1V608zM251 608V538.3h1V608zM252 608V518.9h1V608zM253 608V589.8h1V608zM269 608V605.9h1V608zM290 608V605.9h1V608zM296 608V573.7h1V608zM323 608V583.3h1V608zM350 608V586.6h1V608zM355 608V605.9h1V608zM431 608V589.8h1V608zM479 608V605.9h1V608zM481 608V583.3h1V608zM483 608V596.2h1V608zM485 608V573.7h1V608zM511 608V602.7h1V608zM540 608V586.6h1V608zM541 608V547.9h1V608zM542 608V560.8h1V608zM543 608V596.2h1V608zM551 608V596.2h1V608zM562 608V605.9h1V608zM593 608V589.8h1V608zM619 608V596.2h1V608zM635 608V567.2h1V608zM636 608V596.2h1V608zM640 608V605.9h1V608zM649 608V605.9h1V608zM650 608V564.0h1V608zM651 608V593.0h1V608zM661 608V596.2h1V608zM662 608V605.9h1V608zM674 608V602.7h1V608zM695 608V599.4h1V608zM696 608V557.6h1V608zM697 608V596.2h1V608zM700 608V583.3h1V608zM712 608V605.9h1V608zM713 608V596.2h1V608zM721 608V593.0h1V608zM722 608V560.8h1V608zM723 608V605.9h1V608zM745 608V567.2h1V608zM746 608V567.2h1V608zM747 608V567.2h1V608zM748 608V564.0h1V608zM749 608V567.2h1V608zM750 608V560.8h1V608zM751 608V560.8h1V608zM759 608V599.4h1V608zM760 608V570.5h1V608zM761 608V560.8h1V608zM762 608V567.2h1V608zM763 608V551.1h1V608zM764 608V567.2h1V608zM765 608V515.7h1V608zM766 608V541.5h1V608zM767 608V541.5h1V608zM768 608V547.9h1V608zM769 608V557.6h1V608zM770 608V560.8h1V608zM771 608V567.2h1V608zM772 608V567.2h1V608zM773 608V583.3h1V608zM774 608V596.2h1V608zM775 608V593.0h1V608zM776 608V605.9h1V608zM779 608V586.6h1V608zM780 608V564.0h1V608zM781 608V551.1h1V608zM782 608V580.1h1V608zM783 608V570.5h1V608zM784 608V560.8h1V608zM785 608V573.7h1V608zM795 608V605.9h1V608zM797 608V599.4h1V608zM803 608V589.8h1V608zM807 608V589.8h1V608zM823 608V602.7h1V608zM835 608V576.9h1V608zM836 608V599.4h1V608zM837 608V596.2h1V608zM856 608V583.3h1V608zM857 608V570.5h1V608zM866 608V602.7h1V608zM874 608V605.9h1V608zM889 608V593.0h1V608zM891 608V580.1h1V608zM892 608V586.6h1V608zM927 608V602.7h1V608zM933 608V605.9h1V608zM938 608V602.7h1V608zM943 608V586.6h1V608zM955 608V602.7h1V608zM956 608V605.9h1V608zM958 608V599.4h1V608zM959 608V589.8h1V608zM965 608V602.7h1V608zM967 608V560.8h1V608zM970 608V602.7h1V608zM971 608V586.6h1V608zM972 608V544.7h1V608zM973 608V547.9h1V608zM997 608V570.5h1V608z" fill="#FF0000"/><path d="M53 609.5H999" stroke="#808080" stroke-width="1" stroke-dasharray="3 3" stroke-dashoffset="5" fill="none"/><rect x="50" y="609" width="3" height="1" fill="#808080"/><rect x="999" y="609" width="4" height="1" fill="#808080"/><rect x="50" y="593" width="3" height="1" fill="#808080"/><rect x="999" y="593" width="4" height="1" fill="#808080"/><rect x="50" y="577" width="3" height="1" fill="#808080"/><rect x="999" y="577" width="4" height="1" fill="#808080"/><rect x="50" y="561" width="3" height="1" fill="#808080"/><rect x="999" y="561" width="4" height="1" fill="#808080"/><rect x="50" y="545" width="3" height="1" fill="#808080"/><rect x="999" y="545" width="4" height="1" fill="#808080"/><rect x="50" y="529" width="3" height="1" fill="#808080"/><rect x="999" y="529" width="4" height="1" fill="#808080"/><rect x="50" y="513" width="3" height="1" fill="#808080"/><rect x="999" y="513" width="4" height="1" fill="#808080"/><rect x="50" y="497" width="3" height="1" fill="#808080"/><rect x="999" y="497" width="4" height="1" fill="#808080"/><rect x="50" y="480" width="3" height="1" fill="#808080"/><rect x="999" y="480" width="4" height="1" fill="#808080"/><rect x="50" y="464" width="3" height="1" fill="#808080"/><rect x="999" y="464" width="4" height="1" fill="#808080"/><rect x="50" y="448" width="3" height="1" fill="#808080"/><rect x="999" y="448" width="4" height="1" fill="#808080"/><rect x="50" y="432" width="3" height="1" fill="#808080"/><rect x="999" y="432" width="4" height="1" fill="#808080"/><rect x="52" y="605" width="1" height="1" fill="#808080"/><rect x="999" y="605" width="2" height="1" fill="#808080"/><rect x="52" y="601" width="1" height="1" fill="#808080"/><rect x="999" y="601" width="2" height="1" fill="#808080"/><rect x="52" y="597" width="1" height="1" fill="#808080"/><rect x="999" y="597" width="2" height="1" fill="#808080"/><rect x="52" y="593" width="1" height="1" fill="#808080"/><rect x="999" y="593" width="2" height="1" fill="#808080"/><rect x="52" y="589" width="1" height="1" fill="#808080"/><rect x="999" y="589" width="2" height="1" fill="#808080"/><rect x="52" y="585" width="1" height="1" fill="#808080"/><rect x="999" y="585" width="2" height="1" fill="#808080"/><rect x="52" y="581" width="1" height="1" fill="#808080"/><rect x="999" y="581" width="2" height="1" fill="#808080"/><rect x="52" y="577" width="1" height="1" fill="#808080"/><rect x="999" y="577" width="2" height="1" fill="#808080"/><rect x="52" y="573" width="1" height="1" fill="#808080"/><rect x="999" y="573" width="2" height="1" fill="#808080"/><rect x="52" y="569" width="1" height="1" fill="#808080"/><rect x="999" y="569" width="2" height="1" fill="#808080"/><rect x="52" y="565" width="1" height="1" fill="#808080"/><rect x="999" y="565" width="2" height="1" fill="#808080"/><rect x="52" y="561" width="1" height="1" fill="#808080"/><rect x="999" y="561" width="2" height="1" fill="#808080"/><rect x="52" y="557" width="1" height="1" fill="#808080"/><rect x="999" y="557" width="2" height="1" fill="#808080"/><rect x="52" y="553" width="1" height="1" fill="#808080"/><rect x="999" y="553" width="2" height="1" fill="#808080"/><rect x="52" y="549" width="1" height="1" fill="#808080"/><rect x="999" y="549" width="2" height="1" fill="#808080"/><rect x="52" y="545" width="1" height="1" fill="#808080"/><rect x="999" y="545" width="2" height="1" fill="#808080"/><rect x="52" y="541" width="1" height="1" fill="#808080"/><rect x="999" y="541" width="2" height="1" fill="#808080"/><rect x="52" y="537" width="1" height="1" fill="#808080"/><rect x="999" y="537" width="2" height="1" fill="#808080"/><rect x="52" y="533" width="1" height="1" fill="#808080"/><rect x="999" y="533" width="2" height="1" fill="#808080"/><rect x="52" y="529" width="1" height="1" fill="#808080"/><rect x="999" y="529" width="2" height="1" fill="#808080"/><rect x="52" y="525" width="1" height="1" fill="#808080"/><rect x="999" y="525" width="2" height="1" fill="#808080"/><rect x="52" y="521" width="1" height="1" fill="#808080"/><rect x="999" y="521" width="2" height="1" fill="#808080"/><rect x="52" y="517" width="1" height="1" fill="#808080"/><rect x="999" y="517" width="2" height="1" fill="#808080"/><rect x="52" y="512" width="1" height="1" fill="#808080"/><rect x="999" y="512" width="2" height="1" fill="#808080"/><rect x="52" y="508" width="1" height="1" fill="#808080"/><rect x="999" y="508" width="2" height="1" fill="#808080"/><rect x="52" y="504" width="1" height="1" fill="#808080"/><rect x="999" y="504" width="2" height="1" fill="#808080"/><rect x="52" y="500" width="1" height="1" fill="#808080"/><rect x="999" y="500" width="2" height="1" fill="#808080"/><rect x="52" y="496" width="1" height="1" fill="#808080"/><rect x="999" y="496" width="2" height="1" fill="#808080"/><rect x="52" y="492" width="1" height="1" fill="#808080"/><rect x="999" y="492" width="2" height="1" fill="#808080"/><rect x="52" y="488" width="1" height="1" fill="#808080"/><rect x="999" y="488" width="2" height="1" fill="#808080"/><rect x="52" y="484" width="1" height="1" fill="#808080"/><rect x="999" y="484" width="2" height="1" fill="#808080"/><rect x="52" y="480" width="1" height="1" fill="#808080"/><rect x="999" y="480" width="2" height="1" fill="#808080"/><rect x="52" y="476" width="1" height="1" fill="#808080"/><rect x="999" y="476" width="2" height="1" fill="#808080"/><rect x="52" y="472" width="1" height="1" fill="#808080"/><rect x="999" y="472" width="2" height="1" fill="#808080"/><rect x="52" y="468" width="1" height="1" fill="#808080"/><rect x="999" y="468" width="2" height="1" fill="#808080"/><rect x="52" y="464" width="1" height="1" fill="#808080"/><rect x="999" y="464" width="2" height="1" fill="#808080"/><rect x="52" y="460" width="1" height="1" fill="#808080"/><rect x="999" y="460" width="2" height="1" fill="#808080"/><rect x="52" y="456" width="1" height="1" fill="#808080"/><rect x="999" y="456" width="2" height="1" fill="#808080"/><rect x="52" y="452" width="1" height="1" fill="#808080"/><rect x="999" y="452" width="2" height="1" fill="#808080"/><rect x="52" y="448" width="1" height="1" fill="#808080"/><rect x="999" y="448" width="2" height="1" fill="#808080"/><rect x="52" y="444" width="1" height="1" fill="#808080"/><rect x="999" y="444" width="2" height="1" fill="#808080"/><rect x="52" y="440" width="1" height="1" fill="#808080"/><rect x="999" y="440" width="2" height="1" fill="#808080"/><rect x="52" y="436" width="1" height="1" fill="#808080"/><rect x="999" y="436" width="2" height="1" fill="#808080"/><rect x="52" y="432" width="1" height="1" fill="#808080"/><rect x="999" y="432" width="2" height="1" fill="#808080"/><rect x="54" y="610" width="1" height="4" fill="#808080"/><rect x="63" y="610" width="1" height="2" fill="#808080"/><rect x="72" y="610" width="1" height="2" fill="#808080"/><rect x="81" y="610" width="1" height="2" fill="#808080"/><rect x="90" y="610" width="1" height="4" fill="#808080"/><rect x="101" y="610" width="1" height="2" fill="#808080"/><rect x="112" y="610" width="1" height="2" fill="#808080"/><rect x="123" y="610" width="1" height="2" fill="#808080"/><rect x="133" y="610" width="1" height="4" fill="#808080"/><rect x="144" y="610" width="1" height="2" fill="#808080"/><rect x="155" y="610" width="1" height="2" fill="#808080"/><rect x="166" y="610" width="1" height="2" fill="#808080"/><rect x="177" y="610" width="1" height="4" fill="#808080"/><rect x="187" y="610" width="1" height="2" fill="#808080"/><rect x="198" y="610" width="1" height="2" fill="#808080"/><rect x="209" y="610" width="1" height="2" fill="#808080"/><rect x="219" y="610" width="1" height="4" fill="#808080"/><rect x="231" y="610" width="1" height="2" fill="#808080"/><rect x="242" y="610" width="1" height="2" fill="#808080"/><rect x="253" y="610" width="1" height="2" fill="#808080"/><rect x="264" y="610" width="1" height="4" fill="#808080"/><rect x="275" y="610" width="1" height="2" fill="#808080"/><rect x="286" y="610" width="1" height="2" fill="#808080"/><rect x="297" y="610" width="1" height="2" fill="#808080"/><rect x="308" y="610" width="1" height="4" fill="#808080"/><rect x="320" y="610" width="1" height="2" fill="#808080"/><rect x="331" y="610" width="1" height="2" fill="#808080"/><rect x="342" y="610" width="1" height="2" fill="#808080"/><rect x="353" y="610" width="1" height="4" fill="#808080"/><rect x="365" y="610" width="1" height="2" fill="#808080"/><rect x="376" y="610" width="1" height="2" fill="#808080"/><rect x="388" y="610" width="1" height="2" fill="#808080"/><rect x="399" y="610" width="1" height="4" fill="#808080"/><rect x="411" y="610" width="1" height="2" fill="#808080"/><rect x="423" y="610" width="1" height="2" fill="#808080"/><rect x="434" y="610" width="1" height="2" fill="#808080"/><rect x="446" y="610" width="1" height="4" fill="#808080"/><rect x="458" y="610" width="1" height="2" fill="#808080"/><rect x="470" y="610" width="1" height="2" fill="#808080"/><rect x="482" y="610" width="1" height="2" fill="#808080"/><rect x="494" y="610" width="1" height="4" fill="#808080"/><rect x="507" y="610" width="1" height="2" fill="#808080"/><rect x="519" y="610" width="1" height="2" fill="#808080"/><rect x="532" y="610" width="1" height="2" fill="#808080"/><rect x="545" y="610" width="1" height="4" fill="#808080"/><rect x="557" y="610" width="1" height="2" fill="#808080"/><rect x="570" y="610" width="1" height="2" fill="#808080"/><rect x="582" y="610" width="1" height="2" fill="#808080"/><rect x="595" y="610" width="1" height="4" fill="#808080"/><rect x="607" y="610" width="1" height="2" fill="#808080"/><rect x="620" y="610" width="1" height="2" fill="#808080"/><rect x="632" y="610" width="1" height="2" fill="#808080"/><rect x="645" y="610" width="1" height="4" fill="#808080"/><rect x="658" y="610" width="1" height="2" fill="#808080"/><rect x="671" y="610" width="1" height="2" fill="#808080"/><rect x="684" y="610" width="1" height="2" fill="#808080"/><rect x="698" y="610" width="1" height="4" fill="#808080"/><rect x="711" y="610" width="1" height="2" fill="#808080"/><rect x="724" y="610" width="1" height="2" fill="#808080"/><rect x="737" y="610" width="1" height="2" fill="#808080"/><rect x="750" y="610" width="1" height="4" fill="#808080"/><rect x="764" y="610" width="1" height="2" fill="#808080"/><rect x="777" y="610" width="1" height="2" fill="#808080"/><rect x="791" y="610" width="1" height="2" fill="#808080"/><rect x="804" y="610" width="1" height="4" fill="#808080"/><rect x="818" y="610" width="1" height="2" fill="#808080"/><rect x="832" y="610" width="1" height="2" fill="#808080"/><rect x="846" y="610" width="1" height="2" fill="#808080"/><rect x="859" y="610" width="1" height="4" fill="#808080"/><rect x="873" y="610" width="1" height="2" fill="#808080"/><rect x="886" y="610" width="1" height="2" fill="#808080"/><rect x="900" y="610" width="1" height="2" fill="#808080"/><rect x="913" y="610" width="1" height="4" fill="#808080"/><rect x="926" y="610" width="1" height="2" fill="#808080"/><rect x="940" y="610" width="1" height="2" fill="#808080"/><rect x="953" y="610" width="1" height="2" fill="#808080"/><rect x="966" y="610" width="1" height="4" fill="#808080"/><g font-family="Liberation Sans, sans-serif" stroke="currentColor" stroke-width="0.22"><text x="4.5" y="16" font-size="12" text-anchor="start" font-weight="bold" fill="#000" stroke="#000" textLength="183.5" lengthAdjust="spacingAndGlyphs" xml:space="preserve">KProbe v2.1.0 - Designed by Karr</text><text x="525" y="16" font-size="11.6" text-anchor="start" font-weight="normal" fill="#000" stroke="#000" textLength="136" lengthAdjust="spacingAndGlyphs" xml:space="preserve">Date : 2005/09/24 21:44:55</text><text x="4.3" y="44" font-size="11.6" text-anchor="start" font-weight="normal" fill="#000" stroke="#000" textLength="248.29999999999998" lengthAdjust="spacingAndGlyphs" xml:space="preserve">Model : 4-0-2-0 P:SONY    DVD RW DRU-800A  KY04</text><text x="4.3" y="62" font-size="11.6" text-anchor="start" font-weight="normal" fill="#000" stroke="#000" textLength="246.6" lengthAdjust="spacingAndGlyphs" xml:space="preserve">Disc : DVD-R , ProdiscF01 [Prodisc Technology Inc.]</text><text x="4.3" y="80" font-size="11.6" text-anchor="start" font-weight="normal" fill="#000" stroke="#000" textLength="52.5" lengthAdjust="spacingAndGlyphs" xml:space="preserve">Speed : 4x</text><text x="4.3" y="98" font-size="11.6" text-anchor="start" font-weight="normal" fill="#000" stroke="#000" textLength="162.5" lengthAdjust="spacingAndGlyphs" xml:space="preserve">ECC blocks sum (PI/PO) : 100/100</text><text x="4.3" y="116" font-size="11.6" text-anchor="start" font-weight="normal" fill="#000" stroke="#000" textLength="139.5" lengthAdjust="spacingAndGlyphs" xml:space="preserve">Scanned range : 0 - 231265h</text><text x="4.3" y="134" font-size="11.6" text-anchor="start" font-weight="normal" fill="#000" stroke="#000" textLength="226.7" lengthAdjust="spacingAndGlyphs" xml:space="preserve">PI Max= 159 , Average= 42.42 , Total= 60104</text><text x="4.3" y="152" font-size="11.6" text-anchor="start" font-weight="normal" fill="#000" stroke="#000" textLength="212.7" lengthAdjust="spacingAndGlyphs" xml:space="preserve">PO Max= 56 , Average= 1.18 , Total= 1665</text><text x="53" y="376.0" font-size="12.3" text-anchor="end" font-weight="normal" fill="#000" stroke="#000" textLength="5.9" lengthAdjust="spacingAndGlyphs" xml:space="preserve">0</text><text x="998" y="376.0" font-size="12.3" text-anchor="start" font-weight="normal" fill="#000" stroke="#000" textLength="5.9" lengthAdjust="spacingAndGlyphs" xml:space="preserve">0</text><text x="53" y="353.0" font-size="12.3" text-anchor="end" font-weight="normal" fill="#000" stroke="#000" textLength="11.8" lengthAdjust="spacingAndGlyphs" xml:space="preserve">20</text><text x="998" y="353.0" font-size="12.3" text-anchor="start" font-weight="normal" fill="#000" stroke="#000" textLength="11.8" lengthAdjust="spacingAndGlyphs" xml:space="preserve">20</text><text x="53" y="331.0" font-size="12.3" text-anchor="end" font-weight="normal" fill="#000" stroke="#000" textLength="11.8" lengthAdjust="spacingAndGlyphs" xml:space="preserve">40</text><text x="998" y="331.0" font-size="12.3" text-anchor="start" font-weight="normal" fill="#000" stroke="#000" textLength="11.8" lengthAdjust="spacingAndGlyphs" xml:space="preserve">40</text><text x="53" y="308.0" font-size="12.3" text-anchor="end" font-weight="normal" fill="#000" stroke="#000" textLength="11.8" lengthAdjust="spacingAndGlyphs" xml:space="preserve">60</text><text x="998" y="308.0" font-size="12.3" text-anchor="start" font-weight="normal" fill="#000" stroke="#000" textLength="11.8" lengthAdjust="spacingAndGlyphs" xml:space="preserve">60</text><text x="53" y="285.0" font-size="12.3" text-anchor="end" font-weight="normal" fill="#000" stroke="#000" textLength="11.8" lengthAdjust="spacingAndGlyphs" xml:space="preserve">80</text><text x="998" y="285.0" font-size="12.3" text-anchor="start" font-weight="normal" fill="#000" stroke="#000" textLength="11.8" lengthAdjust="spacingAndGlyphs" xml:space="preserve">80</text><text x="53" y="263.0" font-size="12.3" text-anchor="end" font-weight="normal" fill="#000" stroke="#000" textLength="17.700000000000003" lengthAdjust="spacingAndGlyphs" xml:space="preserve">100</text><text x="998" y="263.0" font-size="12.3" text-anchor="start" font-weight="normal" fill="#000" stroke="#000" textLength="17.700000000000003" lengthAdjust="spacingAndGlyphs" xml:space="preserve">100</text><text x="53" y="240.0" font-size="12.3" text-anchor="end" font-weight="normal" fill="#000" stroke="#000" textLength="17.700000000000003" lengthAdjust="spacingAndGlyphs" xml:space="preserve">120</text><text x="998" y="240.0" font-size="12.3" text-anchor="start" font-weight="normal" fill="#000" stroke="#000" textLength="17.700000000000003" lengthAdjust="spacingAndGlyphs" xml:space="preserve">120</text><text x="53" y="218.0" font-size="12.3" text-anchor="end" font-weight="normal" fill="#000" stroke="#000" textLength="17.700000000000003" lengthAdjust="spacingAndGlyphs" xml:space="preserve">140</text><text x="998" y="218.0" font-size="12.3" text-anchor="start" font-weight="normal" fill="#000" stroke="#000" textLength="17.700000000000003" lengthAdjust="spacingAndGlyphs" xml:space="preserve">140</text><text x="59.65" y="388" font-size="11.5" text-anchor="middle" font-weight="normal" fill="#000" stroke="#000" textLength="30.5" lengthAdjust="spacingAndGlyphs" xml:space="preserve">1020h</text><text x="96.1" y="388" font-size="11.5" text-anchor="middle" font-weight="normal" fill="#000" stroke="#000" textLength="36.6" lengthAdjust="spacingAndGlyphs" xml:space="preserve">17246h</text><text x="138.1" y="388" font-size="11.5" text-anchor="middle" font-weight="normal" fill="#000" stroke="#000" textLength="36.6" lengthAdjust="spacingAndGlyphs" xml:space="preserve">30748h</text><text x="181.6" y="388" font-size="11.5" text-anchor="middle" font-weight="normal" fill="#000" stroke="#000" textLength="38.6" lengthAdjust="spacingAndGlyphs" xml:space="preserve">4A289h</text><text x="225.25" y="388" font-size="11.5" text-anchor="middle" font-weight="normal" fill="#000" stroke="#000" textLength="37.9" lengthAdjust="spacingAndGlyphs" xml:space="preserve">64A68h</text><text x="269.1" y="388" font-size="11.5" text-anchor="middle" font-weight="normal" fill="#000" stroke="#000" textLength="36.6" lengthAdjust="spacingAndGlyphs" xml:space="preserve">7F229h</text><text x="311.85" y="388" font-size="11.5" text-anchor="middle" font-weight="normal" fill="#000" stroke="#000" textLength="35.9" lengthAdjust="spacingAndGlyphs" xml:space="preserve">99433h</text><text x="357.1" y="388" font-size="11.5" text-anchor="middle" font-weight="normal" fill="#000" stroke="#000" textLength="40.4" lengthAdjust="spacingAndGlyphs" xml:space="preserve">B3C2Eh</text><text x="404.4" y="388" font-size="11.5" text-anchor="middle" font-weight="normal" fill="#000" stroke="#000" textLength="39.6" lengthAdjust="spacingAndGlyphs" xml:space="preserve">D03D9h</text><text x="451.15" y="388" font-size="11.5" text-anchor="middle" font-weight="normal" fill="#000" stroke="#000" textLength="39.1" lengthAdjust="spacingAndGlyphs" xml:space="preserve">EC510h</text><text x="498.95" y="388" font-size="11.5" text-anchor="middle" font-weight="normal" fill="#000" stroke="#000" textLength="43.3" lengthAdjust="spacingAndGlyphs" xml:space="preserve">10935Eh</text><text x="550.9" y="388" font-size="11.5" text-anchor="middle" font-weight="normal" fill="#000" stroke="#000" textLength="43.8" lengthAdjust="spacingAndGlyphs" xml:space="preserve">12871Fh</text><text x="600.8" y="388" font-size="11.5" text-anchor="middle" font-weight="normal" fill="#000" stroke="#000" textLength="42.8" lengthAdjust="spacingAndGlyphs" xml:space="preserve">1467E6h</text><text x="650.6" y="388" font-size="11.5" text-anchor="middle" font-weight="normal" fill="#000" stroke="#000" textLength="43.6" lengthAdjust="spacingAndGlyphs" xml:space="preserve">1648E5h</text><text x="701.45" y="388" font-size="11.5" text-anchor="middle" font-weight="normal" fill="#000" stroke="#000" textLength="42.3" lengthAdjust="spacingAndGlyphs" xml:space="preserve">183067h</text><text x="752.8" y="388" font-size="11.5" text-anchor="middle" font-weight="normal" fill="#000" stroke="#000" textLength="45.2" lengthAdjust="spacingAndGlyphs" xml:space="preserve">1A1E01h</text><text x="806.8" y="388" font-size="11.5" text-anchor="middle" font-weight="normal" fill="#000" stroke="#000" textLength="45.8" lengthAdjust="spacingAndGlyphs" xml:space="preserve">1C24E1h</text><text x="858.6" y="388" font-size="11.5" text-anchor="middle" font-weight="normal" fill="#000" stroke="#000" textLength="43.6" lengthAdjust="spacingAndGlyphs" xml:space="preserve">1E1892h</text><text x="910.5" y="388" font-size="11.5" text-anchor="middle" font-weight="normal" fill="#000" stroke="#000" textLength="42.0" lengthAdjust="spacingAndGlyphs" xml:space="preserve">200618h</text><text x="962.15" y="388" font-size="11.5" text-anchor="middle" font-weight="normal" fill="#000" stroke="#000" textLength="44.1" lengthAdjust="spacingAndGlyphs" xml:space="preserve">21F9E2h</text><text x="519.6" y="185" font-size="11.5" text-anchor="start" font-weight="bold" fill="#000080" stroke="#000080" textLength="7" lengthAdjust="spacingAndGlyphs" xml:space="preserve">P</text><text x="48" y="613.0" font-size="12.3" text-anchor="end" font-weight="normal" fill="#000" stroke="#000" textLength="5.9" lengthAdjust="spacingAndGlyphs" xml:space="preserve">0</text><text x="1004" y="613.0" font-size="12.3" text-anchor="start" font-weight="normal" fill="#000" stroke="#000" textLength="5.9" lengthAdjust="spacingAndGlyphs" xml:space="preserve">0</text><text x="48" y="597.0" font-size="12.3" text-anchor="end" font-weight="normal" fill="#000" stroke="#000" textLength="5.9" lengthAdjust="spacingAndGlyphs" xml:space="preserve">5</text><text x="1004" y="597.0" font-size="12.3" text-anchor="start" font-weight="normal" fill="#000" stroke="#000" textLength="5.9" lengthAdjust="spacingAndGlyphs" xml:space="preserve">5</text><text x="48" y="581.0" font-size="12.3" text-anchor="end" font-weight="normal" fill="#000" stroke="#000" textLength="11.8" lengthAdjust="spacingAndGlyphs" xml:space="preserve">10</text><text x="1004" y="581.0" font-size="12.3" text-anchor="start" font-weight="normal" fill="#000" stroke="#000" textLength="11.8" lengthAdjust="spacingAndGlyphs" xml:space="preserve">10</text><text x="48" y="565.0" font-size="12.3" text-anchor="end" font-weight="normal" fill="#000" stroke="#000" textLength="11.8" lengthAdjust="spacingAndGlyphs" xml:space="preserve">15</text><text x="1004" y="565.0" font-size="12.3" text-anchor="start" font-weight="normal" fill="#000" stroke="#000" textLength="11.8" lengthAdjust="spacingAndGlyphs" xml:space="preserve">15</text><text x="48" y="549.0" font-size="12.3" text-anchor="end" font-weight="normal" fill="#000" stroke="#000" textLength="11.8" lengthAdjust="spacingAndGlyphs" xml:space="preserve">20</text><text x="1004" y="549.0" font-size="12.3" text-anchor="start" font-weight="normal" fill="#000" stroke="#000" textLength="11.8" lengthAdjust="spacingAndGlyphs" xml:space="preserve">20</text><text x="48" y="533.0" font-size="12.3" text-anchor="end" font-weight="normal" fill="#000" stroke="#000" textLength="11.8" lengthAdjust="spacingAndGlyphs" xml:space="preserve">25</text><text x="1004" y="533.0" font-size="12.3" text-anchor="start" font-weight="normal" fill="#000" stroke="#000" textLength="11.8" lengthAdjust="spacingAndGlyphs" xml:space="preserve">25</text><text x="48" y="517.0" font-size="12.3" text-anchor="end" font-weight="normal" fill="#000" stroke="#000" textLength="11.8" lengthAdjust="spacingAndGlyphs" xml:space="preserve">30</text><text x="1004" y="517.0" font-size="12.3" text-anchor="start" font-weight="normal" fill="#000" stroke="#000" textLength="11.8" lengthAdjust="spacingAndGlyphs" xml:space="preserve">30</text><text x="48" y="501.0" font-size="12.3" text-anchor="end" font-weight="normal" fill="#000" stroke="#000" textLength="11.8" lengthAdjust="spacingAndGlyphs" xml:space="preserve">35</text><text x="1004" y="501.0" font-size="12.3" text-anchor="start" font-weight="normal" fill="#000" stroke="#000" textLength="11.8" lengthAdjust="spacingAndGlyphs" xml:space="preserve">35</text><text x="48" y="484.0" font-size="12.3" text-anchor="end" font-weight="normal" fill="#000" stroke="#000" textLength="11.8" lengthAdjust="spacingAndGlyphs" xml:space="preserve">40</text><text x="1004" y="484.0" font-size="12.3" text-anchor="start" font-weight="normal" fill="#000" stroke="#000" textLength="11.8" lengthAdjust="spacingAndGlyphs" xml:space="preserve">40</text><text x="48" y="468.0" font-size="12.3" text-anchor="end" font-weight="normal" fill="#000" stroke="#000" textLength="11.8" lengthAdjust="spacingAndGlyphs" xml:space="preserve">45</text><text x="1004" y="468.0" font-size="12.3" text-anchor="start" font-weight="normal" fill="#000" stroke="#000" textLength="11.8" lengthAdjust="spacingAndGlyphs" xml:space="preserve">45</text><text x="48" y="452.0" font-size="12.3" text-anchor="end" font-weight="normal" fill="#000" stroke="#000" textLength="11.8" lengthAdjust="spacingAndGlyphs" xml:space="preserve">50</text><text x="1004" y="452.0" font-size="12.3" text-anchor="start" font-weight="normal" fill="#000" stroke="#000" textLength="11.8" lengthAdjust="spacingAndGlyphs" xml:space="preserve">50</text><text x="48" y="436.0" font-size="12.3" text-anchor="end" font-weight="normal" fill="#000" stroke="#000" textLength="11.8" lengthAdjust="spacingAndGlyphs" xml:space="preserve">55</text><text x="1004" y="436.0" font-size="12.3" text-anchor="start" font-weight="normal" fill="#000" stroke="#000" textLength="11.8" lengthAdjust="spacingAndGlyphs" xml:space="preserve">55</text><text x="53.8" y="625" font-size="11.5" text-anchor="middle" font-weight="normal" fill="#000" stroke="#000" textLength="31.2" lengthAdjust="spacingAndGlyphs" xml:space="preserve">1020h</text><text x="90.5" y="625" font-size="11.5" text-anchor="middle" font-weight="normal" fill="#000" stroke="#000" textLength="36.8" lengthAdjust="spacingAndGlyphs" xml:space="preserve">17246h</text><text x="133.35" y="625" font-size="11.5" text-anchor="middle" font-weight="normal" fill="#000" stroke="#000" textLength="37.1" lengthAdjust="spacingAndGlyphs" xml:space="preserve">30748h</text><text x="176.6" y="625" font-size="11.5" text-anchor="middle" font-weight="normal" fill="#000" stroke="#000" textLength="38.6" lengthAdjust="spacingAndGlyphs" xml:space="preserve">49C40h</text><text x="219.3" y="625" font-size="11.5" text-anchor="middle" font-weight="normal" fill="#000" stroke="#000" textLength="37.4" lengthAdjust="spacingAndGlyphs" xml:space="preserve">63759h</text><text x="264.15" y="625" font-size="11.5" text-anchor="middle" font-weight="normal" fill="#000" stroke="#000" textLength="39.1" lengthAdjust="spacingAndGlyphs" xml:space="preserve">7DF51h</text><text x="308.35" y="625" font-size="11.5" text-anchor="middle" font-weight="normal" fill="#000" stroke="#000" textLength="36.9" lengthAdjust="spacingAndGlyphs" xml:space="preserve">98133h</text><text x="353.2" y="625" font-size="11.5" text-anchor="middle" font-weight="normal" fill="#000" stroke="#000" textLength="39.6" lengthAdjust="spacingAndGlyphs" xml:space="preserve">B294Dh</text><text x="399.45" y="625" font-size="11.5" text-anchor="middle" font-weight="normal" fill="#000" stroke="#000" textLength="41.1" lengthAdjust="spacingAndGlyphs" xml:space="preserve">CE43Fh</text><text x="446.05" y="625" font-size="11.5" text-anchor="middle" font-weight="normal" fill="#000" stroke="#000" textLength="40.3" lengthAdjust="spacingAndGlyphs" xml:space="preserve">E98FBh</text><text x="494.2" y="625" font-size="11.5" text-anchor="middle" font-weight="normal" fill="#000" stroke="#000" textLength="42.8" lengthAdjust="spacingAndGlyphs" xml:space="preserve">106701h</text><text x="544.7" y="625" font-size="11.5" text-anchor="middle" font-weight="normal" fill="#000" stroke="#000" textLength="42.8" lengthAdjust="spacingAndGlyphs" xml:space="preserve">124805h</text><text x="594.8" y="625" font-size="11.5" text-anchor="middle" font-weight="normal" fill="#000" stroke="#000" textLength="42.8" lengthAdjust="spacingAndGlyphs" xml:space="preserve">142250h</text><text x="645.0" y="625" font-size="11.5" text-anchor="middle" font-weight="normal" fill="#000" stroke="#000" textLength="43.4" lengthAdjust="spacingAndGlyphs" xml:space="preserve">16036Fh</text><text x="697.65" y="625" font-size="11.5" text-anchor="middle" font-weight="normal" fill="#000" stroke="#000" textLength="44.7" lengthAdjust="spacingAndGlyphs" xml:space="preserve">17F0F7h</text><text x="750.25" y="625" font-size="11.5" text-anchor="middle" font-weight="normal" fill="#000" stroke="#000" textLength="45.3" lengthAdjust="spacingAndGlyphs" xml:space="preserve">19E4E7h</text><text x="804.2" y="625" font-size="11.5" text-anchor="middle" font-weight="normal" fill="#000" stroke="#000" textLength="47.0" lengthAdjust="spacingAndGlyphs" xml:space="preserve">1BE57Eh</text><text x="859.35" y="625" font-size="11.5" text-anchor="middle" font-weight="normal" fill="#000" stroke="#000" textLength="48.5" lengthAdjust="spacingAndGlyphs" xml:space="preserve">1DF2BFh</text><text x="913.35" y="625" font-size="11.5" text-anchor="middle" font-weight="normal" fill="#000" stroke="#000" textLength="44.3" lengthAdjust="spacingAndGlyphs" xml:space="preserve">1FF316h</text><text x="965.85" y="625" font-size="11.5" text-anchor="middle" font-weight="normal" fill="#000" stroke="#000" textLength="46.5" lengthAdjust="spacingAndGlyphs" xml:space="preserve">21E6FBh</text><text x="518.6" y="422" font-size="11.5" text-anchor="start" font-weight="bold" fill="#000080" stroke="#000080" textLength="15" lengthAdjust="spacingAndGlyphs" xml:space="preserve">PO</text></g></svg></body></html>
